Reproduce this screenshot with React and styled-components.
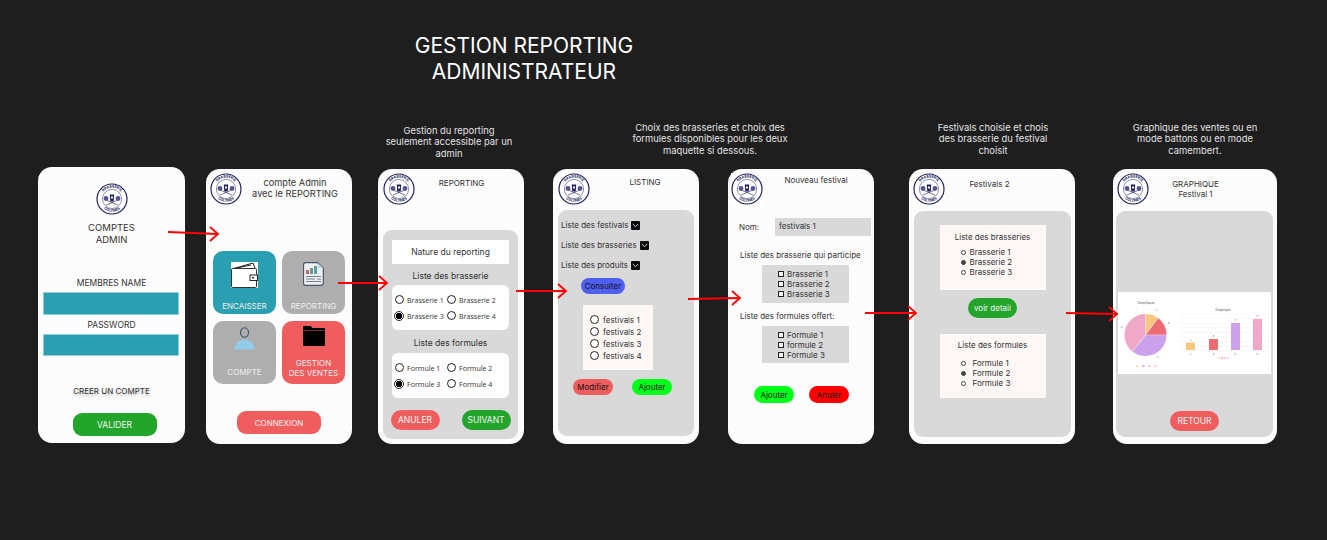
import { useId } from "react";
import styled, { createGlobalStyle } from "styled-components";

const GlobalStyle = createGlobalStyle`
  html, body {
    margin: 0;
    background: #1e1e1e;
  }
  * {
    box-sizing: border-box;
  }
`;

const GREEN = "#22a52a";
const CORAL = "#f05d5e";
const TEAL = "#2b9fb2";
const GREY = "#aeaeae";

const Canvas = styled.div`
  position: relative;
  width: 1327px;
  height: 540px;
  overflow: hidden;
  background: #1e1e1e;
  font-family: Inter, "Liberation Sans", sans-serif;
  color: #2a2a2a;
`;

const MainTitle = styled.h1`
  position: absolute;
  left: 374px;
  top: 33px;
  width: 300px;
  margin: 0;
  font-size: 21px;
  line-height: 26px;
  font-weight: 400;
  text-align: center;
  color: #fff;
`;

const Caption = styled.p`
  position: absolute;
  left: ${(p) => p.$cx - 90}px;
  top: ${(p) => p.$y}px;
  width: 180px;
  margin: 0;
  font-size: 9.4px;
  line-height: 11.4px;
  text-align: center;
  color: #e2e2e2;
`;

const Phone = styled.section`
  position: absolute;
  left: ${(p) => p.$x}px;
  top: ${(p) => p.$y}px;
  width: ${(p) => p.$w}px;
  height: ${(p) => p.$h || 275}px;
  display: flex;
  flex-direction: column;
  padding: 4px ${(p) => p.$pad ?? 5}px 0;
  background: #fcfcfc;
  border-radius: 14px;
`;

const Header = styled.header`
  display: flex;
  height: 32px;
  flex-shrink: 0;
`;

const HeaderTitle = styled.div`
  flex: 1;
  padding-top: ${(p) => p.$pt}px;
  padding-right: ${(p) => p.$pr || 0}px;
  padding-left: ${(p) => p.$pl || 0}px;
  font-size: ${(p) => p.$fs || 8}px;
  line-height: ${(p) => p.$lh || 11}px;
  text-align: center;
  color: #333;
`;

const LogoSvg = styled.svg`
  width: 32px;
  height: 32px;
  flex-shrink: 0;
  margin-left: ${(p) => p.$ml || 0}px;
  margin-top: ${(p) => p.$mt || 0}px;
  align-self: ${(p) => (p.$center ? "center" : "auto")};
`;

const Panel = styled.div`
  width: ${(p) => p.$w}px;
  height: ${(p) => p.$h || 226}px;
  margin-top: ${(p) => p.$mt}px;
  margin-left: ${(p) => p.$ml || 0}px;
  flex-shrink: 0;
  display: flex;
  flex-direction: column;
  align-items: ${(p) => p.$align || "center"};
  padding-top: ${(p) => p.$pt || 0}px;
  background: #d9d9d9;
  border-radius: 9px;
`;

const PageTitle = styled.div`
  margin-top: 7px;
  font-size: 9.5px;
  line-height: 11.5px;
  text-align: center;
  color: #333;
`;

const FieldLabel = styled.div`
  margin-top: ${(p) => p.$mt}px;
  font-size: 8.5px;
  line-height: 11px;
  text-align: center;
  color: #333;
`;

const Field = styled.div`
  width: 136px;
  height: ${(p) => p.$h}px;
  margin-top: 2.5px;
  background: ${TEAL};
  border: 1px solid #8fcfda;
`;

const ShadowLink = styled.div`
  margin-top: 30.5px;
  font-size: 8px;
  line-height: 11px;
  text-align: center;
  color: #333;
  text-shadow: 0 2px 3px rgba(0, 0, 0, 0.3);
`;

const Pill = styled.button`
  display: flex;
  align-items: center;
  justify-content: center;
  flex-shrink: 0;
  width: ${(p) => p.$w}px;
  height: ${(p) => p.$h}px;
  margin-top: ${(p) => p.$mt || 0}px;
  margin-left: ${(p) => p.$ml || 0}px;
  padding: 0;
  border: 0;
  border-radius: ${(p) => p.$r || 10}px;
  align-self: ${(p) => (p.$center ? "center" : "auto")};
  background: ${(p) => p.$bg};
  color: ${(p) => p.$fg || "#f4f4f4"};
  font-family: inherit;
  font-size: ${(p) => p.$fs || 8.5}px;
`;

const TileGrid = styled.div`
  display: grid;
  grid-template-columns: 63px 63px;
  grid-auto-rows: 63px;
  column-gap: 6px;
  row-gap: 7px;
  margin-top: 46px;
  margin-left: 3px;
`;

const Tile = styled.div`
  display: flex;
  flex-direction: column;
  align-items: center;
  padding-top: ${(p) => p.$pt}px;
  padding-bottom: ${(p) => p.$pb}px;
  border-radius: 10px;
  background: ${(p) => p.$bg};
  color: #eeeeee;
  font-size: 8px;
  line-height: 10px;
  text-align: center;
`;

const TileLabel = styled.div`
  margin-top: auto;
`;

const WhiteBox = styled.div`
  width: 117px;
  height: ${(p) => p.$h}px;
  flex-shrink: 0;
  margin-top: ${(p) => p.$mt || 0}px;
  display: ${(p) => (p.$grid ? "grid" : "flex")};
  grid-template-columns: 52px 52px;
  grid-auto-rows: 16px;
  align-content: center;
  align-items: center;
  justify-content: ${(p) => (p.$grid ? "start" : "center")};
  padding-left: ${(p) => (p.$grid ? 3 : 0)}px;
  background: #fff;
  border-radius: ${(p) => p.$r || 0}px;
  font-size: 8.5px;
  color: #333;
`;

const SectionLabel = styled.div`
  margin-top: ${(p) => p.$mt}px;
  margin-left: ${(p) => p.$ml || 0}px;
  font-size: ${(p) => p.$fs || 8.5}px;
  line-height: 12px;
  color: #333;
`;

const ButtonRow = styled.div`
  display: flex;
  justify-content: ${(p) => p.$justify || "flex-start"};
  gap: ${(p) => p.$gap || 0}px;
  width: ${(p) => (p.$w ? `${p.$w}px` : "auto")};
  margin-top: ${(p) => p.$mt}px;
  margin-left: ${(p) => p.$ml || 0}px;
`;

const RadioItem = styled.label`
  display: flex;
  align-items: center;
  gap: ${(p) => p.$gap || 3}px;
  font-family: "Open Sans", sans-serif;
  font-size: 7.1px;
  line-height: 10px;
  color: #333;
`;

const RadioMark = styled.span`
  display: block;
  flex-shrink: 0;
  width: ${(p) => (p.$on ? 10 : 9)}px;
  height: ${(p) => (p.$on ? 10 : 9)}px;
  border: 1px solid #222;
  border-radius: 50%;
  background: ${(p) => (p.$on ? "radial-gradient(circle, #000 0 3px, #fff 3.4px)" : "#fff")};
  margin-left: ${(p) => (p.$on ? -1 : 0)}px;
`;

const DropRow = styled.div`
  display: flex;
  align-items: center;
  gap: ${(p) => p.$gap}px;
  height: 14px;
  margin-top: ${(p) => p.$mt}px;
  margin-left: 3px;
  font-size: 8px;
  color: #333;
`;

const DropBox = styled.span`
  display: flex;
  align-items: center;
  justify-content: center;
  width: 9px;
  height: 9px;
  background: #0b0b0b;
  border-radius: 1px;
`;

const ListCard = styled.div`
  display: flex;
  flex-direction: column;
  justify-content: center;
  gap: 2px;
  width: 70px;
  height: 65px;
  margin-top: 11px;
  margin-left: 25px;
  padding-left: 7px;
  background: #fdf8f6;
`;

const ListItem = styled.div`
  display: flex;
  align-items: center;
  gap: 4px;
  height: 10px;
  font-size: 8px;
  color: #333;
`;

const NameRow = styled.div`
  display: flex;
  align-items: center;
  height: 18px;
  margin-top: 13px;
  margin-left: ${(p) => p.$ml}px;
  font-size: 8px;
  color: #333;
`;

const NameLabel = styled.span`
  width: 36px;
`;

const NameInput = styled.div`
  display: flex;
  align-items: center;
  width: 96px;
  height: 18px;
  padding: 0 0 2px 4px;
  background: #d9d9d9;
`;

const CheckCard = styled.div`
  display: flex;
  flex-direction: column;
  justify-content: center;
  width: 87px;
  height: ${(p) => p.$h}px;
  margin-top: 4px;
  margin-left: 31px;
  padding-left: 16px;
  background: #d9d9d9;
`;

const CheckItem = styled.div`
  display: flex;
  align-items: center;
  gap: 3px;
  height: 10px;
  font-size: 8px;
  color: #333;
`;

const CheckMark = styled.span`
  width: 6px;
  height: 6px;
  border: 1px solid #222;
  background: #f4f4f4;
`;

const InfoCard = styled.div`
  width: 106px;
  height: ${(p) => p.$h}px;
  margin-top: ${(p) => p.$mt}px;
  flex-shrink: 0;
  padding-top: ${(p) => p.$pt}px;
  background: #fdf8f6;
  font-size: 8px;
  text-align: center;
  color: #333;
`;

const InfoTitle = styled.div`
  line-height: 12px;
`;

const InfoList = styled.div`
  display: flex;
  flex-direction: column;
  margin-top: ${(p) => p.$mt}px;
  padding-left: 21px;
`;

const InfoItem = styled.div`
  display: flex;
  align-items: center;
  gap: ${(p) => p.$gap}px;
  height: 10px;
  text-align: left;
`;

const Dot = styled.span`
  width: 5px;
  height: 5px;
  flex-shrink: 0;
  border: 1px solid #444;
  border-radius: 50%;
  background: ${(p) => (p.$on ? "#444" : "#fff")};
`;

const ChartCard = styled.svg`
  width: 153px;
  height: 82px;
  margin-top: 81px;
  flex-shrink: 0;
  background: #fff;
`;

const ArrowLayer = styled.svg`
  position: absolute;
  left: 0;
  top: 0;
  width: 1327px;
  height: 540px;
  pointer-events: none;
`;

function Logo(props) {
  const id = useId();
  return (
    <LogoSvg viewBox="0 0 32 32" {...props}>
      <rect width="32" height="32" fill="#fff" />
      <circle cx="16" cy="16" r="15" fill="#fff" stroke="#211f5c" strokeWidth="1.2" />
      <circle cx="16" cy="16" r="9.6" fill="none" stroke="#211f5c" strokeWidth="0.5" />
      <defs>
        <path id={id + "t"} d="M4.6 16a11.4 11.4 0 0 1 22.8 0" />
        <path id={id + "b"} d="M3.2 16a12.8 12.8 0 0 0 25.6 0" />
      </defs>
      <text fontSize="3.6" fontWeight="700" fill="#211f5c" fontFamily="Inter, sans-serif" textAnchor="middle">
        <textPath href={"#" + id + "t"} startOffset="50%">BRASSERIE</textPath>
      </text>
      <text fontSize="3.6" fontWeight="700" fill="#211f5c" fontFamily="Inter, sans-serif" textAnchor="middle">
        <textPath href={"#" + id + "b"} startOffset="50%">COLTINES</textPath>
      </text>
      <path d="M10 22l12-5M22 22l-12-5" stroke="#211f5c" strokeWidth="0.6" />
      <circle cx="10" cy="15.5" r="2.4" fill="#56548c" />
      <circle cx="22" cy="15.5" r="2.4" fill="#56548c" />
      <path d="M13.8 11.5h4.4l-0.5 7h-3.4z" fill="#211f5c" />
      <rect x="15" y="13.5" width="2" height="2" fill="#fff" />
    </LogoSvg>
  );
}

const WalletIcon = () => (
  <svg width="27" height="26" viewBox="0 0 27 26">
    <rect width="27" height="26" fill="#fff" />
    <path d="M1 7L22 1l2 5" fill="none" stroke="#222" strokeWidth="1" />
    <path d="M3 6.5L20 3" fill="none" stroke="#222" strokeWidth="1" />
    <rect x="0.5" y="6.5" width="25" height="19" rx="1" fill="#fff" stroke="#333" strokeWidth="1" />
    <rect x="19" y="13" width="7.5" height="5.5" fill="#fff" stroke="#222" strokeWidth="1" />
    <rect x="21" y="15" width="2" height="1.5" fill="#333" />
  </svg>
);

const ReportIcon = () => (
  <svg width="21" height="24" viewBox="0 0 21 24">
    <path d="M2.5.7h12l5.8 5.6v15a2 2 0 0 1-2 2H2.500a2 2 0 0 1-2-2V2.700a2 2 0 0 1 2-2z" fill="#eef1f3" stroke="#4d5566" strokeWidth="1.200" />
    <path d="M14.500.7v5.600h5.800z" fill="#c5d8ea" />
    <rect x="3" y="8" width="3" height="4" fill="#b06a6a" />
    <rect x="7" y="6" width="3" height="6" fill="#6d9a8a" />
    <rect x="11" y="4" width="3" height="8" fill="#5f9fa6" />
    <path d="M3 14.500h15M3 17h9M14 17h4M3 19.500h15" stroke="#6a7282" strokeWidth="0.900" />
  </svg>
);

const PersonIcon = () => (
  <svg width="21" height="23" viewBox="0 0 21 23">
    <ellipse cx="10.500" cy="5.500" rx="4" ry="4.700" fill="none" stroke="#3d5070" strokeWidth="1.100" />
    <path d="M.3 22.500C.8 16 5 12.500 10.500 12.500S20.200 16 20.700 22.500z" fill="#90cbe8" />
  </svg>
);

const FolderIcon = () => (
  <svg width="22" height="20" viewBox="0 0 22 20">
    <path d="M0 1a1 1 0 0 1 1-1h6.500l2 2H21a1 1 0 0 1 1 1v16a1 1 0 0 1-1 1H1a1 1 0 0 1-1-1z" fill="#000" />
    <path d="M0 4.500h22" stroke="#f05d5e" strokeWidth="0.500" />
  </svg>
);

const ChevronIcon = () => (
  <svg width="7" height="5" viewBox="0 0 7 5">
    <path d="M.8 1l2.700 2.700L6.200 1" fill="none" stroke="#e4e4e4" strokeWidth="0.900" />
  </svg>
);

// pie wedge from a0 to a1, degrees clockwise from the top
function wedge(cx, cy, r, a0, a1) {
  const rad = (a) => ((a - 90) * Math.PI) / 180;
  const x0 = cx + r * Math.cos(rad(a0));
  const y0 = cy + r * Math.sin(rad(a0));
  const x1 = cx + r * Math.cos(rad(a1));
  const y1 = cy + r * Math.sin(rad(a1));
  return `M${cx} ${cy}L${x0} ${y0}A${r} ${r} 0 ${a1 - a0 > 180 ? 1 : 0} 1 ${x1} ${y1}Z`;
}

const slices = [
  { from: 0, to: 37, color: "#f6c77c" },
  { from: 37, to: 90, color: "#ee6a75" },
  { from: 90, to: 218, color: "#cba1ec" },
  { from: 218, to: 360, color: "#f0a8c8" },
];

const bars = [
  { x: 68, h: 7.5, color: "#f6c77c", name: "A" },
  { x: 91, h: 11, color: "#ee6a75", name: "B" },
  { x: 113, h: 27, color: "#cba1ec", name: "C" },
  { x: 135, h: 31, color: "#f0a8c8", name: "D" },
];

const Chart = () => (
  <ChartCard viewBox="0 0 153 82">
    <text x="28" y="12" fontSize="3.500" fill="#555" textAnchor="middle" fontFamily="Inter, sans-serif">Graphique</text>
    {slices.map((s) => (
      <path key={s.color} d={wedge(27.500, 43, 21.200, s.from, s.to)} fill={s.color} stroke="#fff" strokeWidth="0.300" />
    ))}
    <text x="38" y="19" fontSize="2.500" fill="#777" fontFamily="Inter, sans-serif">A</text>
    <text x="50" y="32" fontSize="2.500" fill="#777" fontFamily="Inter, sans-serif">B</text>
    <text x="39" y="66" fontSize="2.500" fill="#777" fontFamily="Inter, sans-serif">C</text>
    <text x="3" y="36" fontSize="2.500" fill="#777" fontFamily="Inter, sans-serif">D</text>
    {slices.map((s, i) => (
      <rect key={s.color} x={18 + i * 6} y="73.500" width="2.500" height="1" fill={s.color} />
    ))}
    <text x="105" y="19" fontSize="3.200" fill="#555" textAnchor="middle" fontFamily="Inter, sans-serif">Graphique</text>
    {[0, 1, 2, 3, 4, 5, 6, 7, 8].map((i) => (
      <path key={i} d={`M62 ${22 + i * 4.600}h89`} stroke="#ececec" strokeWidth="0.500" />
    ))}
    {bars.map((b) => (
      <g key={b.name}>
        <rect x={b.x} y={58 - b.h} width="9" height={b.h} fill={b.color} />
        <text x={b.x + 4.500} y={56 - b.h} fontSize="2.500" fill="#777" textAnchor="middle" fontFamily="Inter, sans-serif">{b.name}</text>
        <text x={b.x + 4.500} y="63" fontSize="2.500" fill="#777" textAnchor="middle" fontFamily="Inter, sans-serif">{b.name}</text>
      </g>
    ))}
    {slices.map((s, i) => (
      <rect key={s.color} x={100 + i * 3} y="65.500" width="2" height="1" fill={s.color} />
    ))}
  </ChartCard>
);

const arrows = [
  [168, 232, 218, 234],
  [338, 283, 387, 283],
  [516, 291, 566, 291],
  [688, 299, 740, 298],
  [865, 313, 916, 313],
  [1066, 313, 1117, 314],
];

const Radio = ({ on, label }) => (
  <RadioItem>
    <RadioMark $on={on} />
    {label}
  </RadioItem>
);

export default function App() {
  return (
    <Canvas>
      <GlobalStyle />
      <MainTitle>GESTION REPORTING<br />ADMINISTRATEUR</MainTitle>

      <Caption $cx={449} $y={125}>Gestion du reporting<br />seulement accessible par un<br />admin</Caption>
      <Caption $cx={710} $y={122}>Choix des brasseries et choix des<br />formules disponibles pour les deux<br />maquette si dessous.</Caption>
      <Caption $cx={993} $y={122}>Festivals choisie et chois<br />des brasserie du festival<br />choisit</Caption>
      <Caption $cx={1195} $y={122}>Graphique des ventes ou en<br />mode battons ou en mode<br />camembert.</Caption>

      <Phone $x={38} $y={167} $w={147} $h={276}>
        <Logo $center $mt={12} />
        <PageTitle>COMPTES<br />ADMIN</PageTitle>
        <FieldLabel $mt={33}>MEMBRES NAME</FieldLabel>
        <Field $h={23} />
        <FieldLabel $mt={5.500}>PASSWORD</FieldLabel>
        <Field $h={22} />
        <ShadowLink>CREER UN COMPTE</ShadowLink>
        <Pill $center $w={84} $h={23} $mt={16} $ml={6} $bg={GREEN} $r={9}>VALIDER</Pill>
      </Phone>

      <Phone $x={206} $y={169} $w={146} $pad={4}>
        <Header>
          <Logo />
          <HeaderTitle $pt={3.500} $fs={9.200}>compte Admin<br />avec le REPORTING</HeaderTitle>
        </Header>
        <TileGrid>
          <Tile $bg={TEAL} $pt={11} $pb={3.500}>
            <WalletIcon />
            <TileLabel>ENCAISSER</TileLabel>
          </Tile>
          <Tile $bg={GREY} $pt={11} $pb={3.500}>
            <ReportIcon />
            <TileLabel>REPORTING</TileLabel>
          </Tile>
          <Tile $bg={GREY} $pt={6} $pb={7}>
            <PersonIcon />
            <TileLabel>COMPTE</TileLabel>
          </Tile>
          <Tile $bg={CORAL} $pt={5} $pb={6}>
            <FolderIcon />
            <TileLabel>GESTION<br />DES VENTES</TileLabel>
          </Tile>
        </TileGrid>
        <Pill $center $w={84} $h={23} $mt={27} $bg={CORAL} $r={9} $fs={8}>CONNEXION</Pill>
      </Phone>

      <Phone $x={378} $y={169} $w={146}>
        <Header>
          <Logo />
          <HeaderTitle $pt={5} $pr={11}>REPORTING</HeaderTitle>
        </Header>
        <Panel $w={135} $h={209} $mt={25} $pt={10}>
          <WhiteBox $h={24}>Nature du reporting</WhiteBox>
          <SectionLabel $mt={6}>Liste des brasserie</SectionLabel>
          <WhiteBox $h={45} $mt={3} $r={6} $grid>
            <Radio label="Brasserie 1" />
            <Radio label="Brasserie 2" />
            <Radio on label="Brasserie 3" />
            <Radio label="Brasserie 4" />
          </WhiteBox>
          <SectionLabel $mt={7}>Liste des formules</SectionLabel>
          <WhiteBox $h={45} $mt={4} $r={6} $grid>
            <Radio label="Formule 1" />
            <Radio label="Formule 2" />
            <Radio on label="Formule 3" />
            <Radio label="Formule 4" />
          </WhiteBox>
          <ButtonRow $w={120} $mt={12} $justify="space-between">
            <Pill $w={49} $h={20} $bg={CORAL}>ANULER</Pill>
            <Pill $w={49} $h={20} $bg={GREEN}>SUIVANT</Pill>
          </ButtonRow>
        </Panel>
      </Phone>

      <Phone $x={553} $y={169} $w={146}>
        <Header>
          <Logo />
          <HeaderTitle $pt={4} $pl={6}>LISTING</HeaderTitle>
        </Header>
        <Panel $w={136} $mt={5} $align="flex-start" $pt={8}>
          <DropRow $mt={0} $gap={3}>Liste des festivals<DropBox><ChevronIcon /></DropBox></DropRow>
          <DropRow $mt={6} $gap={3}>Liste des brasseries<DropBox><ChevronIcon /></DropBox></DropRow>
          <DropRow $mt={6} $gap={3}>Liste des produits<DropBox><ChevronIcon /></DropBox></DropRow>
          <Pill $w={44} $h={16} $mt={6} $ml={23} $bg="#4f5ff0" $fg="#111" $fs={8}>Consulter</Pill>
          <ListCard>
            <ListItem><RadioMark />festivals 1</ListItem>
            <ListItem><RadioMark />festivals 2</ListItem>
            <ListItem><RadioMark />festivals 3</ListItem>
            <ListItem><RadioMark />festivals 4</ListItem>
          </ListCard>
          <ButtonRow $mt={9} $ml={15} $gap={19}>
            <Pill $w={40} $h={16} $bg={CORAL} $fg="#111" $fs={8}>Modifier</Pill>
            <Pill $w={40} $h={16} $bg="#00ff19" $fg="#111" $fs={8}>Ajouter</Pill>
          </ButtonRow>
        </Panel>
      </Phone>

      <Phone $x={728} $y={169} $w={146} $pad={3}>
        <Header>
          <Logo />
          <HeaderTitle $pt={2} $pr={2}>Nouveau festival</HeaderTitle>
        </Header>
        <NameRow $ml={8}>
          <NameLabel>Nom:</NameLabel>
          <NameInput>festivals 1</NameInput>
        </NameRow>
        <SectionLabel $mt={13} $ml={9} $fs={8}>Liste des brasserie qui participe</SectionLabel>
        <CheckCard $h={38}>
          <CheckItem><CheckMark />Brasserie 1</CheckItem>
          <CheckItem><CheckMark />Brasserie 2</CheckItem>
          <CheckItem><CheckMark />Brasserie 3</CheckItem>
        </CheckCard>
        <SectionLabel $mt={7} $ml={9} $fs={8}>Liste des formules offert:</SectionLabel>
        <CheckCard $h={37}>
          <CheckItem><CheckMark />Formule 1</CheckItem>
          <CheckItem><CheckMark />formule 2</CheckItem>
          <CheckItem><CheckMark />Formule 3</CheckItem>
        </CheckCard>
        <ButtonRow $mt={23} $ml={23} $gap={15}>
          <Pill $w={40} $h={17} $bg="#00ff19" $fg="#111" $fs={8}>Ajouter</Pill>
          <Pill $w={40} $h={17} $bg="#ff0000" $fg="#111" $fs={8}>Anuler</Pill>
        </ButtonRow>
      </Phone>

      <Phone $x={909} $y={169} $w={166} $pad={5}>
        <Header>
          <Logo $ml={-1} />
          <HeaderTitle $pt={6} $pr={36}>Festivals 2</HeaderTitle>
        </Header>
        <Panel $w={157} $mt={6} $pt={14}>
          <InfoCard $h={65} $pt={6} $mt={0}>
            <InfoTitle>Liste des brasseries</InfoTitle>
            <InfoList $mt={4}>
              <InfoItem $gap={4}><Dot />Brasserie 1</InfoItem>
              <InfoItem $gap={4}><Dot $on />Brasserie 2</InfoItem>
              <InfoItem $gap={4}><Dot />Brasserie 3</InfoItem>
            </InfoList>
          </InfoCard>
          <Pill $w={49} $h={20} $mt={8} $bg={GREEN} $fs={8}>voir detail</Pill>
          <InfoCard $h={64} $pt={5} $mt={16}>
            <InfoTitle>Liste des formules</InfoTitle>
            <InfoList $mt={7}>
              <InfoItem $gap={7}><Dot />Formule 1</InfoItem>
              <InfoItem $gap={7}><Dot $on />Formule 2</InfoItem>
              <InfoItem $gap={7}><Dot />Formule 3</InfoItem>
            </InfoList>
          </InfoCard>
        </Panel>
      </Phone>

      <Phone $x={1113} $y={169} $w={164} $pad={3}>
        <Header>
          <Logo $ml={1} />
          <HeaderTitle $pt={6} $pr={32} $lh={10}>GRAPHIQUE<br />Festival 1</HeaderTitle>
        </Header>
        <Panel $w={157} $mt={6}>
          <Chart />
          <Pill $w={49} $h={20} $mt={37} $bg={CORAL}>RETOUR</Pill>
        </Panel>
      </Phone>

      <ArrowLayer viewBox="0 0 1327 540">
        {arrows.map(([x0, y0, x1, y1]) => (
          <g key={x0} fill="none" stroke="#ff0000" strokeWidth="1.800">
            <path d={`M${x0} ${y0}L${x1} ${y1}`} />
            <path d={`M${x1 - 8} ${y1 - 7}L${x1} ${y1}L${x1 - 8} ${y1 + 7}`} />
          </g>
        ))}
      </ArrowLayer>
    </Canvas>
  );
}
